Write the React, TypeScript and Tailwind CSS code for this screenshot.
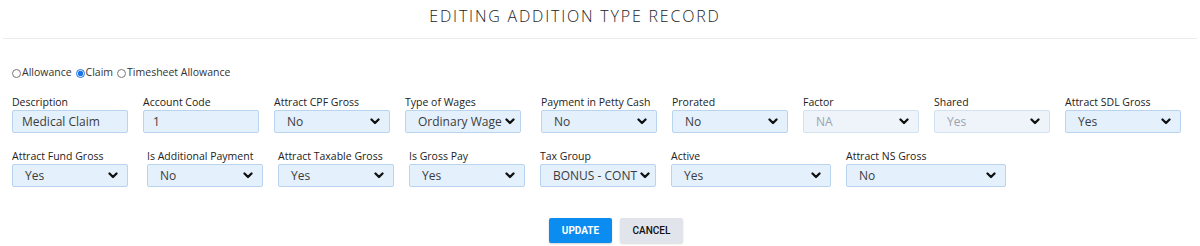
import { useState } from 'react'

type Field = {
  label: string
  value: string
  kind: 'input' | 'select'
  width: string
  disabled?: boolean
}

const rowOne: Field[] = [
  { label: 'Description', value: 'Medical Claim', kind: 'input', width: 'w-[116px]' },
  { label: 'Account Code', value: '1', kind: 'input', width: 'w-[116px]' },
  { label: 'Attract CPF Gross', value: 'No', kind: 'select', width: 'w-[116px]' },
  { label: 'Type of Wages', value: 'Ordinary Wage', kind: 'select', width: 'w-[116px]' },
  { label: 'Payment in Petty Cash', value: 'No', kind: 'select', width: 'w-[116px]' },
  { label: 'Prorated', value: 'No', kind: 'select', width: 'w-[116px]' },
  { label: 'Factor', value: 'NA', kind: 'select', width: 'w-[116px]', disabled: true },
  { label: 'Shared', value: 'Yes', kind: 'select', width: 'w-[116px]', disabled: true },
  { label: 'Attract SDL Gross', value: 'Yes', kind: 'select', width: 'w-[116px]' },
]

const rowTwo: Field[] = [
  { label: 'Attract Fund Gross', value: 'Yes', kind: 'select', width: 'w-[116px]' },
  { label: 'Is Additional Payment', value: 'No', kind: 'select', width: 'w-[116px]' },
  { label: 'Attract Taxable Gross', value: 'Yes', kind: 'select', width: 'w-[116px]' },
  { label: 'Is Gross Pay', value: 'Yes', kind: 'select', width: 'w-[116px]' },
  { label: 'Tax Group', value: 'BONUS - CONT', kind: 'select', width: 'w-[116px]' },
  { label: 'Active', value: 'Yes', kind: 'select', width: 'w-[160px]' },
  { label: 'Attract NS Gross', value: 'No', kind: 'select', width: 'w-[160px]' },
]

function Chevron() {
  return (
    <svg width="10" height="7" viewBox="0 0 10 7" className="shrink-0">
      <path d="M1.5 1.5 L5 5 L8.5 1.5" fill="none" stroke="#111" strokeWidth="2.3" strokeLinecap="round" strokeLinejoin="round" />
    </svg>
  )
}

function FormField({ field }: { field: Field }) {
  const box = field.disabled
    ? 'bg-[#eef4fa] border-[#d3e2f0] text-[#9aa3ad]'
    : 'bg-[#e4f0fb] border-[#b8d4ee] text-[#3c3c3c]'
  return (
    <div className={`${field.width} flex flex-col`}>
      <label className="text-[10.5px] leading-[13px] text-[#222] mb-[1px] whitespace-nowrap">{field.label}</label>
      <div className={`h-[23px] border rounded-[2px] flex items-center gap-[3px] ${box} ${field.kind === 'input' ? 'pl-[9px]' : 'pl-[12px] pr-[9px]'}`}>
        <span className="text-[12px] flex-1 whitespace-nowrap">{field.value}</span>
        {field.kind === 'select' && <Chevron />}
      </div>
    </div>
  )
}

export default function App() {
  const [type, setType] = useState('claim')

  return (
    <div className="w-[1200px] h-[246px] bg-white font-['Open_Sans',sans-serif] overflow-hidden">
      <div className="h-[39px] mx-[3px] border-b border-[#ebebeb] flex items-center justify-center pr-[50px]">
        <h2 className="text-[16px] font-light tracking-[1.8px] text-[#222] pb-[6px]">EDITING ADDITION TYPE RECORD</h2>
      </div>

      <div className="px-[12px] pt-[27px]">
        <div className="flex items-center text-[10.5px] text-[#333] h-[14px]">
          {[
            ['allowance', 'Allowance'],
            ['claim', 'Claim'],
            ['timesheet', 'Timesheet Allowance'],
          ].map(([key, label]) => (
            <label key={key} className="flex items-center mr-[4px]">
              <input
                type="radio"
                name="type"
                checked={type === key}
                onChange={() => setType(key)}
                className="w-[9px] h-[9px] m-0 mr-[1px] accent-[#1a73e8]"
              />
              <span>{label}</span>
            </label>
          ))}
        </div>

        <div className="flex mt-[16px]">
          {rowOne.map((f, i) => (
            <div key={f.label} className={i === 0 ? '' : i === 4 ? 'ml-[20px]' : 'ml-[15px]'}>
              <FormField field={f} />
            </div>
          ))}
        </div>

        <div className="flex mt-[17px]">
          {rowTwo.map((f, i) => (
            <div key={f.label} className={i === 0 ? '' : i === 1 ? 'ml-[19px]' : 'ml-[15px]'}>
              <FormField field={f} />
            </div>
          ))}
        </div>
      </div>

      <div className="flex justify-center gap-[8px] mt-[31px] pl-[32px] font-['Roboto',sans-serif]">
        <button className="w-[63px] h-[25px] bg-[#0b8cf0] text-white text-[10px] font-bold rounded-[2px] shadow-[0_1px_2px_rgba(0,0,0,0.2)]">
          UPDATE
        </button>
        <button className="w-[63px] h-[25px] bg-[#e1e5eb] text-[#111] text-[10px] font-medium rounded-[2px] shadow-[0_1px_2px_rgba(0,0,0,0.15)]">
          CANCEL
        </button>
      </div>
    </div>
  )
}
